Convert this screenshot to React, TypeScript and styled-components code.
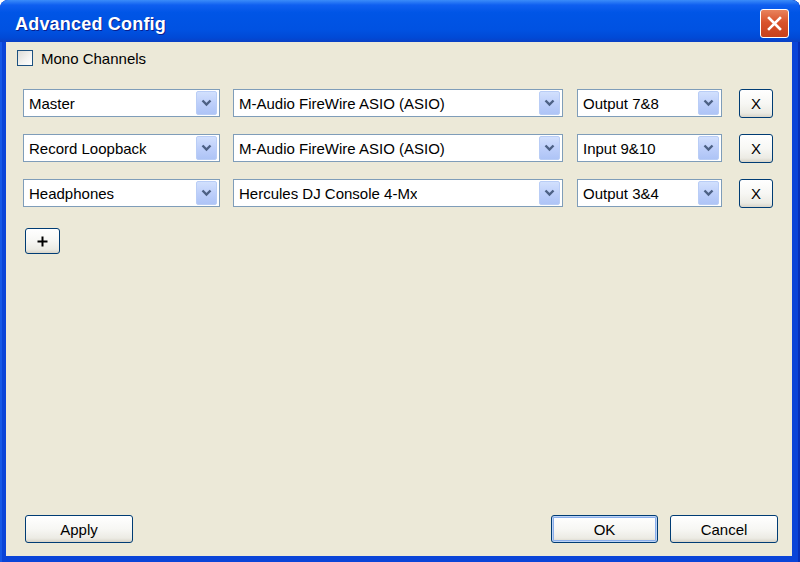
import React from 'react';
import styled, { createGlobalStyle } from 'styled-components';

// ==============================================================================
// Data
// ==============================================================================

interface ChannelRow {
  name: string;
  device: string;
  port: string;
}

const rows: ChannelRow[] = [
  { name: 'Master', device: 'M-Audio FireWire ASIO (ASIO)', port: 'Output 7&8' },
  { name: 'Record Loopback', device: 'M-Audio FireWire ASIO (ASIO)', port: 'Input 9&10' },
  { name: 'Headphones', device: 'Hercules DJ Console 4-Mx', port: 'Output 3&4' },
];

// ==============================================================================
// Styled Components
// ==============================================================================

const GlobalStyle = createGlobalStyle`
  html, body {
    margin: 0;
    padding: 0;
    background: #ffffff;
  }
  body {
    font-family: 'Liberation Sans', Arial, sans-serif;
  }
`;

const Window = styled.div`
  width: 800px;
  height: 562px;
  box-sizing: border-box;
  display: flex;
  flex-direction: column;
  background: #0a44d8;
  border-radius: 8px 8px 0 0;
  padding: 0 8px 6px 6px;
  box-shadow: inset 2px 0 0 #1658e6, inset -2px 0 0 #0630b8;
  overflow: hidden;
`;

const TitleBar = styled.div`
  height: 42px;
  flex: none;
  display: flex;
  align-items: center;
  justify-content: space-between;
  margin: 0 -8px 0 -6px;
  padding: 0 11px 0 15px;
  background: linear-gradient(
    to bottom,
    #3b8cf9 0%,
    #0f5ff0 12%,
    #0055e6 30%,
    #0052e2 70%,
    #0049d6 90%,
    #0a40c4 100%
  );
  border-radius: 8px 8px 0 0;
`;

const Title = styled.span`
  color: #ffffff;
  font-family: 'Liberation Sans', Arial, sans-serif;
  font-weight: bold;
  font-size: 18px;
  letter-spacing: 0.2px;
  text-shadow: 1px 1px 0 #0a1e8c;
  padding-top: 6px;
`;

const CloseButton = styled.div`
  width: 27px;
  height: 27px;
  margin-top: 4px;
  border: 1px solid #ffffff;
  border-radius: 3px;
  background: linear-gradient(to bottom, #e9835d 0%, #d9532c 45%, #c8401c 100%);
  display: flex;
  align-items: center;
  justify-content: center;
`;

const Body = styled.div`
  flex: 1;
  background: #ece9d8;
  display: flex;
  flex-direction: column;
  padding: 8px 14px 13px 11px;
  box-sizing: border-box;
  font-size: 15px;
  color: #000000;
`;

const CheckRow = styled.label`
  display: flex;
  align-items: center;
  gap: 8px;
  height: 16px;
`;

const CheckBox = styled.span`
  width: 14px;
  height: 14px;
  border: 1px solid #1c5180;
  background: linear-gradient(135deg, #dcdcd7 0%, #f4f4f2 60%, #ffffff 100%);
`;

const Rows = styled.div`
  display: flex;
  flex-direction: column;
  gap: 17px;
  margin-top: 23px;
  padding-left: 6px;
`;

const Row = styled.div`
  display: flex;
  align-items: center;
  height: 28px;
`;

const Combo = styled.div<{ $width: number; $gap: number }>`
  width: ${(p) => p.$width}px;
  margin-right: ${(p) => p.$gap}px;
  height: 28px;
  box-sizing: border-box;
  border: 1px solid #7f9db9;
  background: #ffffff;
  display: flex;
  align-items: center;
  justify-content: space-between;
  padding: 1px 2px 1px 5px;
`;

const ComboText = styled.span`
  white-space: nowrap;
  overflow: hidden;
`;

const ComboArrow = styled.span`
  width: 21px;
  height: 24px;
  box-sizing: border-box;
  border: 1px solid #b9cdf6;
  border-radius: 2px;
  background: linear-gradient(to bottom, #d2e0fd 0%, #bccefa 55%, #aec4f6 100%);
  display: flex;
  align-items: center;
  justify-content: center;
`;

const XpButton = styled.button<{ $width: number; $height: number; $default?: boolean }>`
  width: ${(p) => p.$width}px;
  height: ${(p) => p.$height}px;
  flex: none;
  box-sizing: border-box;
  border: 1px solid #003c74;
  border-radius: 3px;
  background: linear-gradient(to bottom, #ffffff 0%, #f7f7f4 50%, #ecebe4 85%, #d8d4c8 100%);
  font-family: 'Liberation Sans', Arial, sans-serif;
  font-size: 15px;
  color: #000000;
  padding: 0;
  display: flex;
  align-items: center;
  justify-content: center;
  box-shadow: ${(p) =>
    p.$default ? 'inset 0 0 0 1px #bcd3f6, inset 0 0 0 2px #8aaeea' : 'none'};
`;

const AddRow = styled.div`
  margin-top: 21px;
  padding-left: 8px;
`;

const Spacer = styled.div`
  flex: 1;
`;

const Footer = styled.div`
  display: flex;
  align-items: center;
  gap: 12px;
  padding-left: 8px;
`;

// ==============================================================================
// Icons
// ==============================================================================

const Chevron = () => (
  <svg width="11" height="8" viewBox="0 0 11 8">
    <path d="M1.5 1.5 L5.5 5.5 L9.5 1.5" fill="none" stroke="#4d6185" strokeWidth="2.4" />
  </svg>
);

const CloseGlyph = () => (
  <svg width="15" height="15" viewBox="0 0 15 15">
    <path d="M2 2 L13 13 M13 2 L2 13" stroke="#ffffff" strokeWidth="2.6" strokeLinecap="square" />
  </svg>
);

const PlusGlyph = () => (
  <svg width="11" height="11" viewBox="0 0 11 11">
    <path d="M5.5 0.5 V10.5 M0.5 5.5 H10.5" stroke="#000000" strokeWidth="2" />
  </svg>
);

// ==============================================================================
// Main Component
// ==============================================================================

const Select: React.FC<{ value: string; width: number; gap: number }> = ({ value, width, gap }) => (
  <Combo $width={width} $gap={gap}>
    <ComboText>{value}</ComboText>
    <ComboArrow>
      <Chevron />
    </ComboArrow>
  </Combo>
);

const App: React.FC = () => {
  return (
    <>
      <GlobalStyle />
      <Window>
        <TitleBar>
          <Title>Advanced Config</Title>
          <CloseButton>
            <CloseGlyph />
          </CloseButton>
        </TitleBar>
        <Body>
          <CheckRow>
            <CheckBox />
            Mono Channels
          </CheckRow>

          <Rows>
            {rows.map((r) => (
              <Row key={r.name}>
                <Select value={r.name} width={197} gap={13} />
                <Select value={r.device} width={330} gap={14} />
                <Select value={r.port} width={145} gap={17} />
                <XpButton $width={34} $height={29}>X</XpButton>
              </Row>
            ))}
          </Rows>

          <AddRow>
            <XpButton $width={35} $height={26}>
              <PlusGlyph />
            </XpButton>
          </AddRow>

          <Spacer />

          <Footer>
            <XpButton $width={108} $height={28}>Apply</XpButton>
            <Spacer />
            <XpButton $width={107} $height={28} $default>OK</XpButton>
            <XpButton $width={108} $height={28}>Cancel</XpButton>
          </Footer>
        </Body>
      </Window>
    </>
  );
};

export default App;
